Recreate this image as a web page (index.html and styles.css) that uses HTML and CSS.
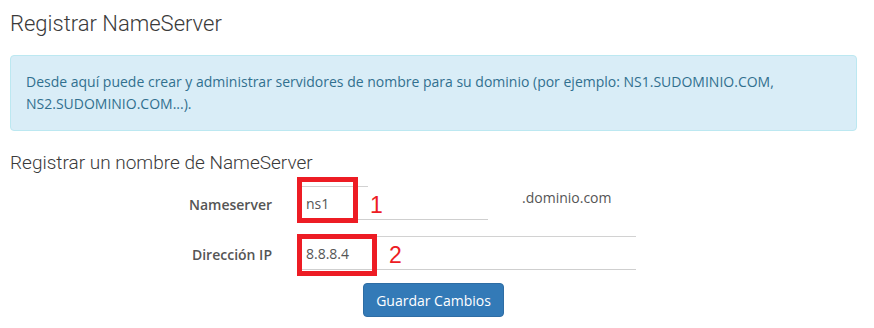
FILE: index.html
```html
<!DOCTYPE html>
<html lang="es">
<head>
<meta charset="utf-8">
<title>Registrar NameServer</title>
<link rel="stylesheet" href="styles.css">
</head>
<body>
<div class="page">
  <h1 class="title">Registrar NameServer</h1>
  <div class="alert">Desde aquí puede crear y administrar servidores de nombre para su dominio (por ejemplo: NS1.SUDOMINIO.COM, NS2.SUDOMINIO.COM...).</div>
  <h2 class="subtitle">Registrar un nombre de NameServer</h2>
  <form class="form">
    <div class="row row-ns">
      <label class="label">Nameserver</label>
      <div class="field field-ns">
        <input class="input input-ns" type="text" value="ns1">
        <span class="mark mark-ns"></span>
        <span class="num num-1">1</span>
      </div>
      <span class="suffix">.dominio.com</span>
    </div>
    <div class="row row-ip">
      <label class="label">Dirección IP</label>
      <div class="field field-ip">
        <input class="input input-ip" type="text" value="8.8.8.4">
        <span class="mark mark-ip"></span>
        <span class="num num-2">2</span>
      </div>
    </div>
    <div class="actions">
      <button class="btn" type="button">Guardar Cambios</button>
    </div>
  </form>
</div>
</body>
</html>
```
FILE: styles.css
```css
* { box-sizing: border-box; }
html, body { margin: 0; padding: 0; background: #fff; }
body { font-family: "Open Sans", "Liberation Sans", sans-serif; color: #555; }
.page { padding: 0 17px 0 10px; }
.title {
  margin: 0;
  padding-top: 10px;
  font-family: Roboto, "Liberation Sans", sans-serif;
  font-weight: 300;
  font-size: 22px;
  line-height: 28px;
  color: #3a3a3a;
  height: 55px;
}
.alert {
  background: #d9edf7;
  border: 1px solid #bce8f1;
  border-radius: 4px;
  color: #31708f;
  font-size: 14px;
  line-height: 22px;
  padding: 15px 15px;
  height: 76px;
}
.subtitle {
  margin: 0;
  padding-top: 20px;
  font-family: Roboto, "Liberation Sans", sans-serif;
  font-weight: 300;
  font-size: 19px;
  line-height: 24px;
  color: #3a3a3a;
}
.row { display: flex; align-items: center; }
.row-ns { height: 50px; margin-top: 2px; }
.row-ip { height: 52px; }
.label {
  width: 262px;
  text-align: right;
  font-weight: 600;
  font-size: 14px;
  color: #555;
  padding-top: 4px;
}
.row-ip .label { padding-top: 2px; }
.field { position: relative; margin-left: 28px; }
.field-ns { width: 188px; }
.field-ip { width: 336px; }
.input {
  display: block;
  width: 100%;
  border: 0;
  border-top: 1px solid #d2d2d2;
  border-bottom: 1px solid #cfcfcf;
  background: #fff;
  font-family: "Open Sans", "Liberation Sans", sans-serif;
  font-size: 14px;
  color: #555;
  padding: 0 6px;
  outline: none;
}
.input-ns { height: 34px; margin-top: 2px; }
.input-ip { height: 34px; }
.mark {
  position: absolute;
  border: 5px solid #ed1c24;
}
.mark-ns { left: -3px; top: -7px; width: 61px; height: 46px; }
.mark-ip { left: -3px; top: -2px; width: 80px; height: 42px; }
.num {
  position: absolute;
  font-family: "Liberation Sans", Arial, sans-serif;
  font-size: 23px;
  color: #ed1c24;
  line-height: 24px;
}
.num-1 { left: 68px; top: 1px; padding: 8px 130px 0 2px; background: #fff; }
.num-2 { left: 89px; top: 7px; }
.suffix { margin-left: 34px; font-size: 14px; color: #555; margin-top: -10px; }
.actions { padding-left: 353px; padding-top: 4px; }
.btn {
  background: #337ab7;
  border: 1px solid #2e6da4;
  border-radius: 4px;
  color: #fff;
  font-family: "Open Sans", "Liberation Sans", sans-serif;
  font-size: 14px;
  height: 34px;
  width: 141px;
  padding: 0;
}
```
